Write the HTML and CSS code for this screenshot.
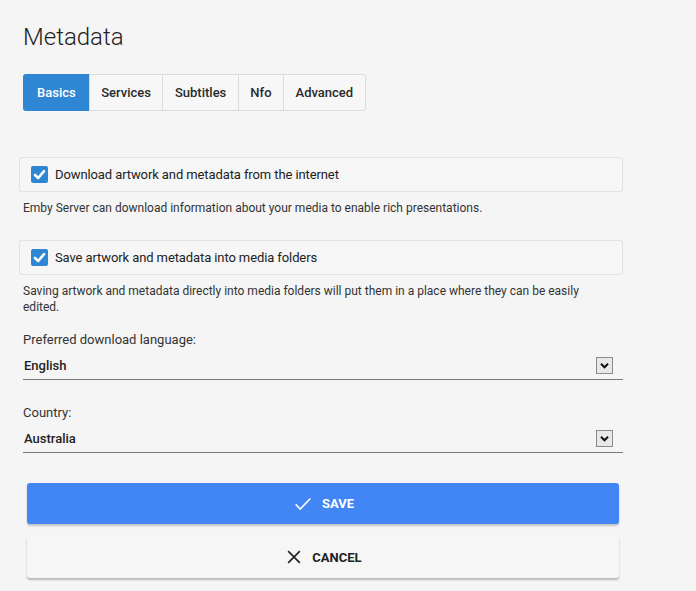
FILE: index.html
```html
<!DOCTYPE html>
<html>
<head>
<meta charset="utf-8">
<link rel="stylesheet" href="styles.css">
</head>
<body>
<div class="page">
  <h1 class="title">Metadata</h1>
  <div class="tabs">
    <div class="tab active">Basics</div>
    <div class="tab">Services</div>
    <div class="tab">Subtitles</div>
    <div class="tab">Nfo</div>
    <div class="tab">Advanced</div>
  </div>

  <div class="check-row first">
    <span class="checkbox"><svg viewBox="0 0 17 17" width="17" height="17"><path d="M4 9 L7.2 12 L13 5.2" fill="none" stroke="#fff" stroke-width="2.6" stroke-linecap="round" stroke-linejoin="round"/></svg></span>
    <span class="check-label">Download artwork and metadata from the internet</span>
  </div>
  <div class="desc">Emby Server can download information about your media to enable rich presentations.</div>

  <div class="check-row second">
    <span class="checkbox"><svg viewBox="0 0 17 17" width="17" height="17"><path d="M4 9 L7.2 12 L13 5.2" fill="none" stroke="#fff" stroke-width="2.6" stroke-linecap="round" stroke-linejoin="round"/></svg></span>
    <span class="check-label">Save artwork and metadata into media folders</span>
  </div>
  <div class="desc">Saving artwork and metadata directly into media folders will put them in a place where they can be easily edited.</div>

  <div class="field first-field">
    <div class="field-label">Preferred download language:</div>
    <div class="select">
      <span class="select-value">English</span>
      <span class="arrow"><svg viewBox="0 0 17 17" width="17" height="17"><path d="M4.5 6.5 L8.5 10.5 L12.5 6.5" fill="none" stroke="#111" stroke-width="2.2"/></svg></span>
    </div>
  </div>

  <div class="field second-field">
    <div class="field-label">Country:</div>
    <div class="select">
      <span class="select-value">Australia</span>
      <span class="arrow"><svg viewBox="0 0 17 17" width="17" height="17"><path d="M4.5 6.5 L8.5 10.5 L12.5 6.5" fill="none" stroke="#111" stroke-width="2.2"/></svg></span>
    </div>
  </div>

  <div class="buttons">
    <button class="btn save"><svg viewBox="0 0 24 24" width="22" height="22"><path d="M4 12.5 L9 17.5 L20 6" fill="none" stroke="#fff" stroke-width="1.8"/></svg><span>SAVE</span></button>
    <button class="btn cancel"><svg viewBox="0 0 24 24" width="20" height="20"><path d="M5 5 L19 19 M19 5 L5 19" fill="none" stroke="#222" stroke-width="2"/></svg><span>CANCEL</span></button>
  </div>
</div>
</body>
</html>
```

FILE: styles.css
```css
html, body {
  margin: 0;
  padding: 0;
  background: #f5f5f5;
}
body {
  font-family: Roboto, "Liberation Sans", sans-serif;
  color: #222;
  width: 696px;
  height: 591px;
  overflow: hidden;
}
.page {
  padding: 22px 73px 0 23px;
}
.title {
  margin: 0;
  font-size: 24px;
  line-height: 30px;
  font-weight: 300;
  color: #222;
}
.tabs {
  display: inline-flex;
  margin-top: 22px;
  border: 1px solid #dcdcdc;
  border-radius: 3px;
  height: 35px;
  background: #f7f7f7;
}
.tab {
  display: flex;
  align-items: center;
  font-size: 13px;
  font-weight: 500;
  color: #2a2a2a;
  padding: 0 11.5px;
  border-left: 1px solid #dcdcdc;
}
.tab:first-child {
  border-left: none;
}
.tab.active {
  background: #2f86d2;
  color: #fff;
  border-radius: 3px 0 0 3px;
  margin: -1px 0 -1px -1px;
  padding: 0 13px 0 14px;
}
.check-row {
  display: flex;
  align-items: center;
  height: 33px;
  margin-left: -4px;
  border: 1px solid #e2e2e2;
  border-radius: 3px;
  padding-left: 11px;
  background: #f6f6f6;
}
.check-row.first { margin-top: 46px; }
.check-row.second { margin-top: 24px; }
.checkbox {
  width: 17px;
  height: 17px;
  background: #2f86d2;
  border-radius: 2px;
  display: flex;
  margin-right: 7px;
}
.check-label {
  font-size: 13px;
  color: #222;
  letter-spacing: -0.1px;
}
.desc {
  font-size: 12px;
  line-height: 16px;
  color: #333;
  margin-top: 8px;
  max-width: 588px;
}
.field.first-field { margin-top: 17px; }
.field.second-field { margin-top: 25px; }
.field-label {
  font-size: 13px;
  line-height: 16px;
  color: #333;
}
.select {
  display: flex;
  align-items: center;
  justify-content: space-between;
  height: 27px;
  margin-top: 4px;
  border-bottom: 1px solid #777;
  padding-left: 1px;
}
.select-value {
  font-size: 13px;
  font-weight: 500;
  color: #222;
}
.arrow {
  width: 15px;
  height: 15px;
  border: 1px solid #8a8a8a;
  background: #e8e8e8;
  margin-right: 10px;
  display: flex;
  align-items: center;
  justify-content: center;
}
.arrow svg { width: 15px; height: 15px; }
.buttons {
  margin-top: 30px;
  padding: 0 4px;
  display: flex;
  flex-direction: column;
  gap: 12px;
}
.btn {
  display: flex;
  align-items: center;
  justify-content: center;
  gap: 8px;
  height: 41px;
  border: none;
  border-radius: 3px;
  font-family: Roboto, "Liberation Sans", sans-serif;
  font-size: 13px;
  font-weight: 700;
  padding: 0;
}
.save {
  background: #4285f4;
  color: #fff;
  box-shadow: 0 2px 2px rgba(0,0,0,0.2);
}
.cancel {
  background: #f6f6f6;
  color: #222;
  height: 42px;
  box-shadow: 0 2px 2px rgba(0,0,0,0.25);
}
```
